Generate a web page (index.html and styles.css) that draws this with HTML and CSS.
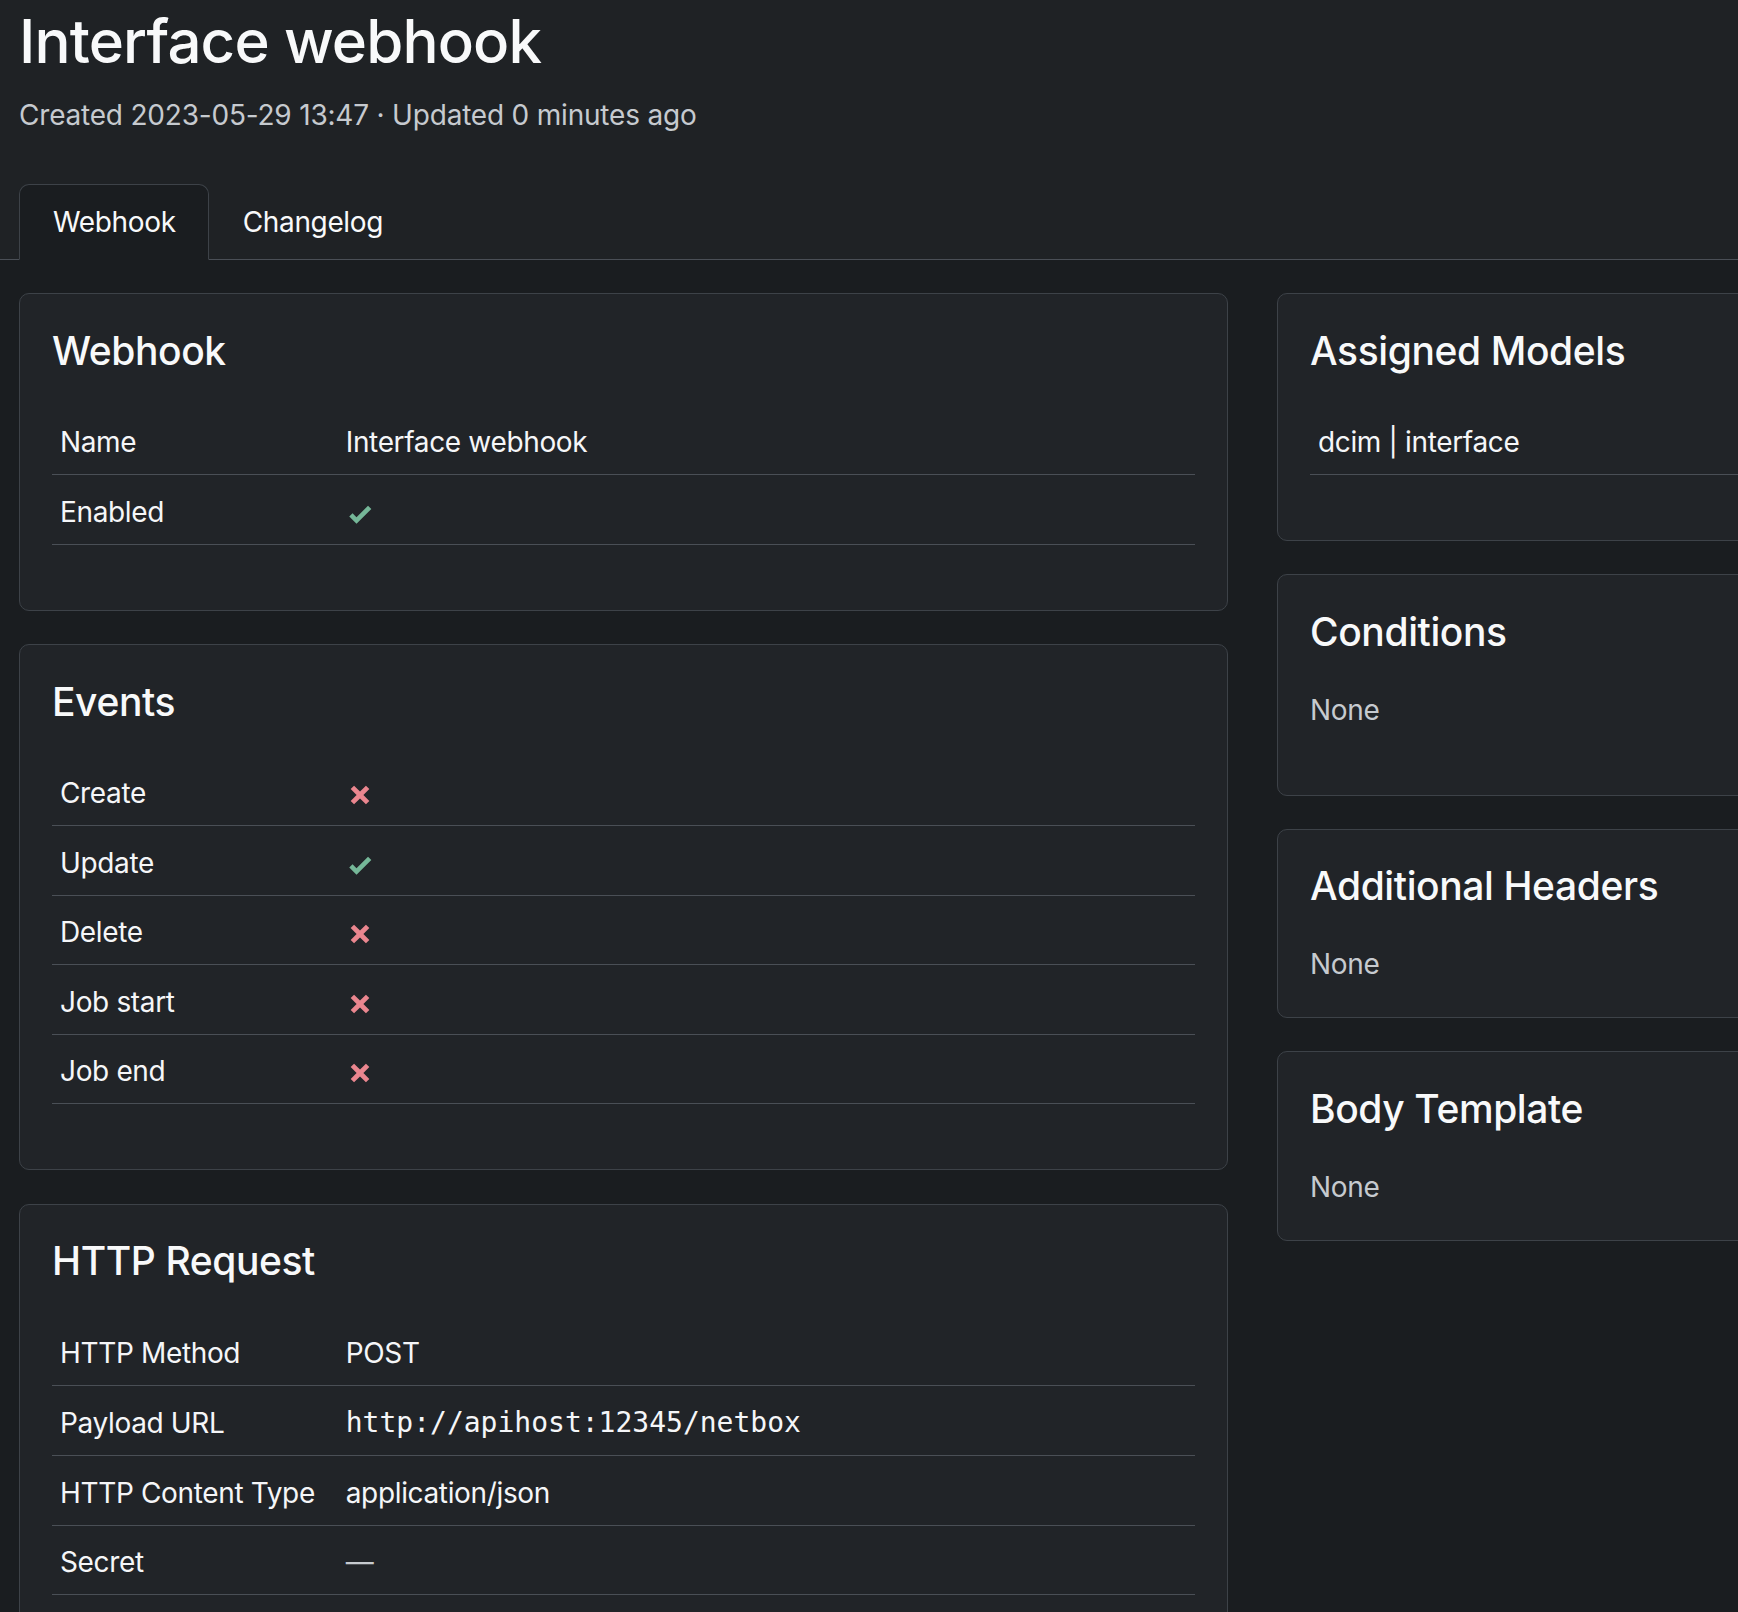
FILE: index.html
```html
<!DOCTYPE html>
<html lang="en">
<head>
<meta charset="utf-8">
<title>Interface webhook</title>
<link rel="stylesheet" href="styles.css">
</head>
<body>
<div class="page">
  <header class="page-header">
    <h1 class="page-title">Interface webhook</h1>
    <div class="page-meta">Created 2023-05-29 13:47 · Updated 0 minutes ago</div>
    <nav class="tabs">
      <a class="tab active">Webhook</a>
      <a class="tab">Changelog</a>
    </nav>
  </header>

  <main class="content">
    <div class="col col-left">
      <section class="card">
        <h2 class="card-title">Webhook</h2>
        <table class="attr-table">
          <tr><th>Name</th><td>Interface webhook</td></tr>
          <tr><th>Enabled</th><td><svg class="icon yes" viewBox="0 0 24 24"><path d="M9,20.42L2.79,14.21L5.62,11.38L9,14.77L18.88,4.88L21.71,7.71L9,20.42Z"/></svg></td></tr>
        </table>
      </section>

      <section class="card">
        <h2 class="card-title">Events</h2>
        <table class="attr-table">
          <tr><th>Create</th><td><svg class="icon no" viewBox="0 0 24 24"><path d="M20 6.91L17.09 4L12 9.09L6.91 4L4 6.91L9.09 12L4 17.09L6.91 20L12 14.91L17.09 20L20 17.09L14.91 12L20 6.91Z"/></svg></td></tr>
          <tr><th>Update</th><td><svg class="icon yes" viewBox="0 0 24 24"><path d="M9,20.42L2.79,14.21L5.62,11.38L9,14.77L18.88,4.88L21.71,7.71L9,20.42Z"/></svg></td></tr>
          <tr><th>Delete</th><td><svg class="icon no" viewBox="0 0 24 24"><path d="M20 6.91L17.09 4L12 9.09L6.91 4L4 6.91L9.09 12L4 17.09L6.91 20L12 14.91L17.09 20L20 17.09L14.91 12L20 6.91Z"/></svg></td></tr>
          <tr><th>Job start</th><td><svg class="icon no" viewBox="0 0 24 24"><path d="M20 6.91L17.09 4L12 9.09L6.91 4L4 6.91L9.09 12L4 17.09L6.91 20L12 14.91L17.09 20L20 17.09L14.91 12L20 6.91Z"/></svg></td></tr>
          <tr><th>Job end</th><td><svg class="icon no" viewBox="0 0 24 24"><path d="M20 6.91L17.09 4L12 9.09L6.91 4L4 6.91L9.09 12L4 17.09L6.91 20L12 14.91L17.09 20L20 17.09L14.91 12L20 6.91Z"/></svg></td></tr>
        </table>
      </section>

      <section class="card">
        <h2 class="card-title">HTTP Request</h2>
        <table class="attr-table">
          <tr><th>HTTP Method</th><td>POST</td></tr>
          <tr><th>Payload URL</th><td><span class="mono">http://apihost:12345/netbox</span></td></tr>
          <tr><th>HTTP Content Type</th><td>application/json</td></tr>
          <tr><th>Secret</th><td class="muted">—</td></tr>
        </table>
      </section>
    </div>

    <div class="col col-right">
      <section class="card">
        <h2 class="card-title">Assigned Models</h2>
        <table class="attr-table">
          <tr><td>dcim | interface</td></tr>
        </table>
      </section>

      <section class="card">
        <h2 class="card-title">Conditions</h2>
        <p class="none none-spaced">None</p>
      </section>

      <section class="card">
        <h2 class="card-title">Additional Headers</h2>
        <p class="none">None</p>
      </section>

      <section class="card">
        <h2 class="card-title">Body Template</h2>
        <p class="none">None</p>
      </section>
    </div>
  </main>
</div>
</body>
</html>
```

FILE: styles.css
```css
html, body {
  margin: 0;
  padding: 0;
  overflow: hidden;
  background: #1a1d20;
}

body {
  font-family: "Inter", "Noto Sans", "Liberation Sans", sans-serif;
  font-size: 28px;
  line-height: 42px;
  letter-spacing: -0.35px;
  color: #f5f6f8;
}

.page {
  width: 1738px;
  height: 1612px;
  overflow: hidden;
}

.page-header {
  background: #1f2225;
  border-bottom: 1px solid #4a4f56;
  padding: 4px 0 0 19px;
}

.page-title {
  margin: 0;
  font-size: 60px;
  line-height: 74px;
  font-weight: 500;
  color: #f8f9fa;
  letter-spacing: -0.85px;
}

.page-meta {
  margin-top: 16px;
  color: #c6cacf;
  letter-spacing: -0.2px;
}

.tabs {
  display: flex;
  margin-top: 48px;
  margin-bottom: -1px;
}

.tab {
  display: block;
  padding: 16px 32px 16px 33px;
  border: 1px solid transparent;
  border-radius: 10px 10px 0 0;
  color: #f8f9fa;
  font-weight: 400;
  text-decoration: none;
}

.tab.active {
  background: #1a1d20;
  border-color: #3d4248 #3d4248 #1a1d20;
}

.content {
  display: grid;
  grid-template-columns: 1209px 850px;
  column-gap: 49px;
  padding: 33px 0 0 19px;
  align-items: start;
}

.col {
  display: flex;
  flex-direction: column;
}

.col-left {
  gap: 33.5px;
}

.col-right {
  gap: 33px;
}

.card {
  background: #212428;
  border: 1px solid #3d4248;
  border-radius: 10px;
  padding: 32.5px 32px 32px;
}

.card-title {
  margin: 0 0 31px;
  font-size: 39px;
  line-height: 48px;
  font-weight: 500;
  letter-spacing: -0.4px;
  color: #f8f9fa;
}

.attr-table {
  width: 100%;
  border-collapse: collapse;
  margin-bottom: 33px;
}

.attr-table th,
.attr-table td {
  text-align: left;
  font-weight: 400;
  padding: 15.75px 8px 10.75px;
  border-bottom: 1px solid #4a4f56;
  vertical-align: middle;
  color: #f5f6f8;
}

.attr-table th {
  width: 25%;
}

.attr-table td.muted {
  color: #c6cacf;
}

.mono {
  font-family: "DejaVu Sans Mono", "Liberation Mono", monospace;
  font-size: 28px;
  letter-spacing: 0;
}

.icon {
  display: inline-block;
  width: 28px;
  height: 28px;
  vertical-align: -6px;
}

.icon.yes {
  fill: #75b798;
}

.icon.no {
  fill: #ea868f;
}

.none {
  margin: 0;
  padding: 2px 0 0;
  color: #c6cacf;
}

.none-spaced {
  margin-bottom: 32px;
}
```
